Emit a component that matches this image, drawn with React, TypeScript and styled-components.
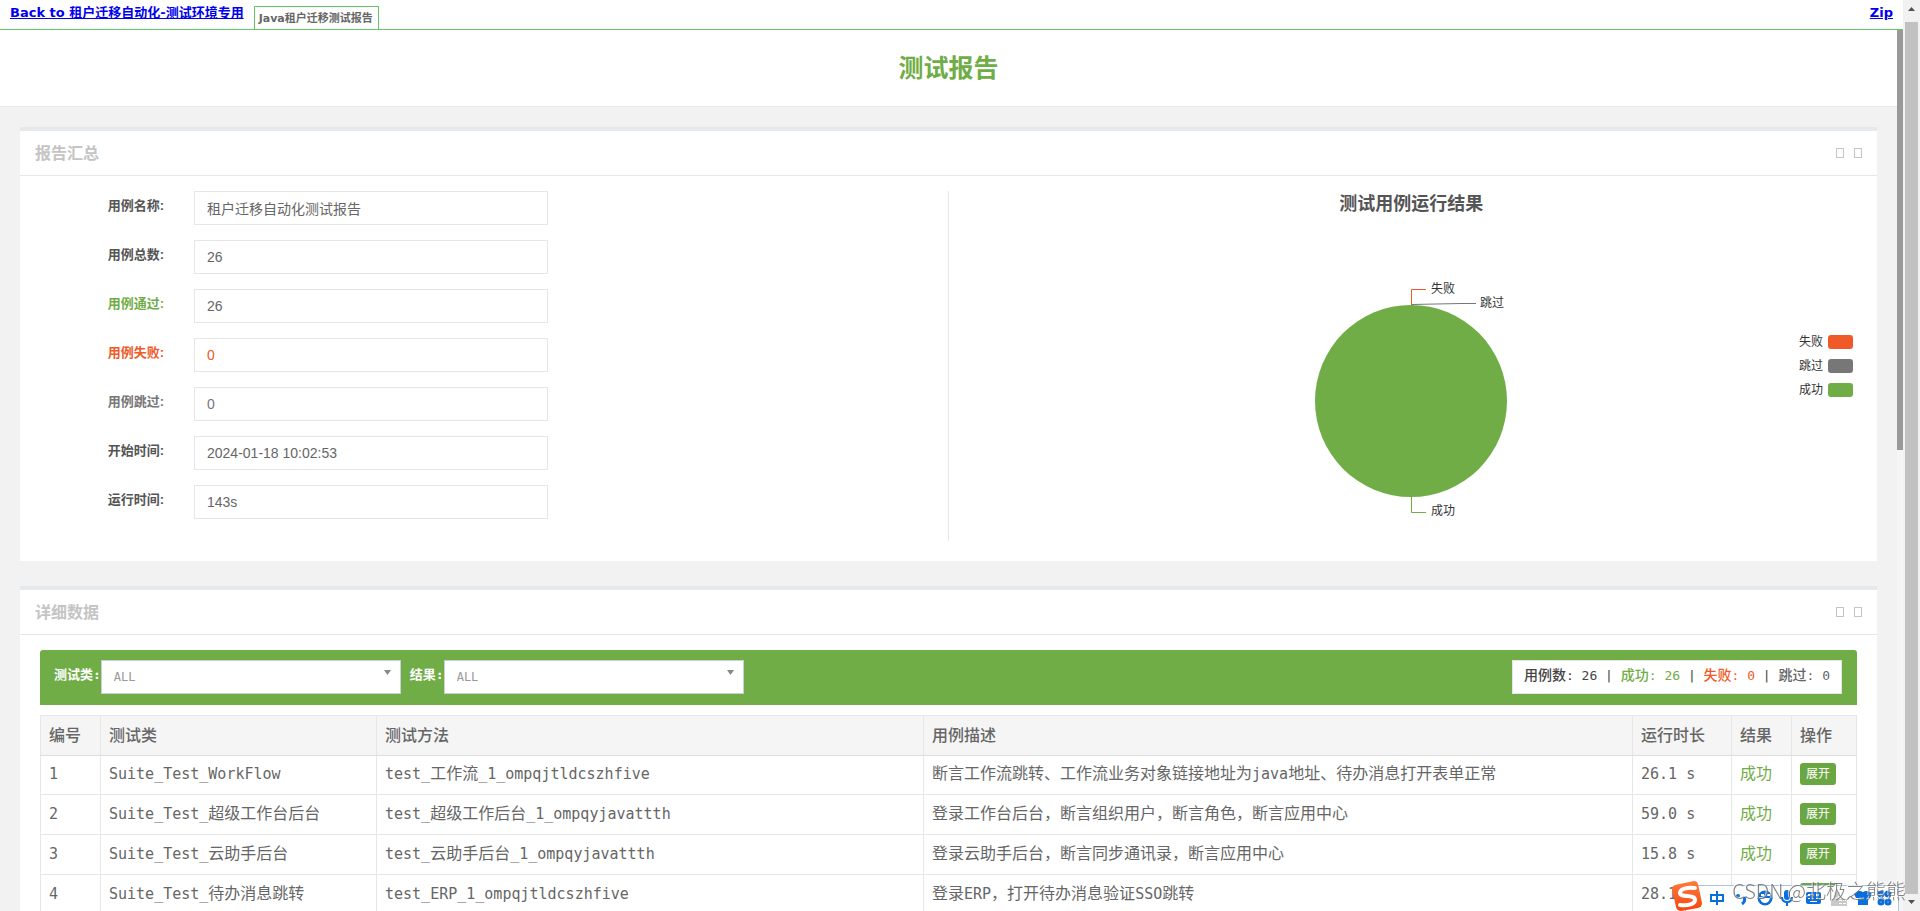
import React from 'react';
import styled, { createGlobalStyle } from 'styled-components';

const GREEN = '#70ad47';
const RED = '#f05a28';
const GRAY = '#777777';
const LINE = '#e7e7e7';
const SANS = '"Liberation Sans", "Noto Sans CJK SC", sans-serif';
const MONO = '"DejaVu Sans Mono", "Noto Sans CJK SC", monospace';

const GlobalStyle = createGlobalStyle`
  * { box-sizing: border-box; }
  body { margin: 0; overflow: hidden; background: #fff; color: #666; font-family: ${SANS}; }
`;

const Shell = styled.div`
  display: flex;
  height: 100vh;
  overflow: hidden;
`;

const Main = styled.div`
  flex: 1;
  min-width: 0;
  display: flex;
  flex-direction: column;
`;

const TopBar = styled.nav`
  flex: none;
  display: flex;
  align-items: flex-start;
  height: 30px;
  padding: 0 10px;
  border-bottom: 1px solid #66c766;
  font-family: "DejaVu Sans", "Noto Sans CJK SC", sans-serif;
`;

const NavLink = styled.a`
  color: #0000ee;
  font-size: 13px;
  font-weight: bold;
  line-height: 26px;
  &:last-child { margin-left: auto; }
`;

const Tab = styled.button`
  height: 23px;
  margin: 6px 0 0 10px;
  padding: 2px 5px 0 4px;
  border: 1px solid #66c766;
  border-bottom: 0;
  background: #fff;
  color: #666;
  font: bold 11px/18px "DejaVu Sans", "Noto Sans CJK SC", sans-serif;
`;

const Frame = styled.div`
  flex: 1;
  min-height: 0;
  display: flex;
`;

const Page = styled.main`
  flex: 1;
  min-width: 0;
  overflow: hidden;
  background: #f2f2f2;
`;

const PageHeader = styled.header`
  height: 77px;
  padding-top: 20px;
  border-bottom: 1px solid ${LINE};
  background: #fff;
  text-align: center;
`;

const PageTitle = styled.h1`
  margin: 0;
  color: ${GREEN};
  font-size: 25px;
  line-height: 36px;
`;

const Panels = styled.div`
  display: flex;
  flex-direction: column;
  gap: 25px;
  padding: 20px;
`;

const Panel = styled.section`
  border-top: 4px solid #e5e9ec;
  background: #fff;
`;

const PanelHead = styled.div`
  display: flex;
  align-items: center;
  gap: 10px;
  height: 45px;
  padding: 0 15px;
  border-bottom: 1px solid ${LINE};
`;

const PanelTitle = styled.h2`
  flex: 1;
  margin: 0;
  color: #c4c4c4;
  font-size: 16px;
  line-height: 26px;
  padding-top: 2px;
`;

const ToolButton = styled.button`
  width: 8px;
  height: 10px;
  padding: 0;
  border: 1px solid #c4c4c4;
  background: transparent;
`;

const Summary = styled.div`
  display: grid;
  grid-template-columns: calc(50% - 1px) 1fr;
  padding: 15px 0 20px;
`;

const Fields = styled.form`
  display: flex;
  flex-direction: column;
  gap: 15px;
`;

const Field = styled.div<{ $color: string }>`
  display: grid;
  grid-template-columns: 144px 354px;
  column-gap: 30px;
  color: ${p => p.$color};
`;

const FieldLabel = styled.label`
  text-align: right;
  font-size: 13px;
  font-weight: bold;
  line-height: 30px;
`;

const FieldInput = styled.input<{ $color: string }>`
  height: 34px;
  padding: 0 12px;
  border: 1px solid #e6e6e6;
  background: #fff;
  color: ${p => p.$color};
  font: 14px ${SANS};
`;

const ChartArea = styled.div`
  position: relative;
  height: 350px;
  padding: 0 18px 0 15px;
  border-left: 1px solid ${LINE};
  display: flex;
  flex-direction: column;
  align-items: center;
`;

const ChartTitle = styled.h3`
  margin: 0;
  color: #555;
  font-size: 18px;
  line-height: 26px;
`;

const Pie = styled.svg`
  display: block;
  width: 240px;
  height: 324px;
  font: 12px ${SANS};
`;

const Legend = styled.ul`
  position: absolute;
  top: 144px;
  right: 24px;
  display: flex;
  flex-direction: column;
  gap: 10px;
  margin: 0;
  padding: 0;
  list-style: none;
`;

const LegendItem = styled.li<{ $color: string }>`
  display: flex;
  align-items: center;
  gap: 5px;
  color: #333;
  font-size: 12px;
  line-height: 14px;
  &::after {
    content: '';
    width: 25px;
    height: 14px;
    border-radius: 3px;
    background: ${p => p.$color};
  }
`;

const Detail = styled.div`
  padding: 15px 20px;
  font-family: ${MONO};
`;

const FilterBar = styled.div`
  display: flex;
  gap: 9px;
  height: 55px;
  margin-bottom: 10px;
  padding: 10px 15px 10px 14px;
  border-radius: 3px 3px 0 0;
  background: ${GREEN};
`;

const Filter = styled.div`
  display: flex;
  height: 34px;
`;

const FilterLabel = styled.label`
  color: #fff;
  font-size: 13px;
  font-weight: bold;
  line-height: 30px;
`;

const SelectWrap = styled.div`
  position: relative;
`;

const Select = styled.select`
  appearance: none;
  width: 300px;
  height: 34px;
  padding: 0 12px;
  border: 1px solid #c8d0dc;
  border-radius: 0;
  background: #fff;
  color: #999;
  font: 12px ${MONO};
`;

const SelectArrow = styled.svg`
  position: absolute;
  top: 10px;
  right: 10px;
  width: 7px;
  height: 5px;
  fill: #888;
  pointer-events: none;
`;

const Totals = styled.div`
  height: 34px;
  margin-left: auto;
  padding: 0 11px;
  border: 1px solid #e6e6e6;
  background: #fff;
  color: #444;
  font-size: 13px;
  line-height: 30px;
  white-space: pre;
`;

const Tint = styled.span<{ $color: string }>`
  color: ${p => p.$color};
`;

const Han = styled.span<{ $size: number; $bold?: boolean }>`
  font-family: "Noto Sans CJK SC", sans-serif;
  font-size: ${p => p.$size}px;
  font-weight: ${p => (p.$bold ? 500 : 'inherit')};
  line-height: 1;
`;

const Table = styled.table`
  width: 100%;
  table-layout: fixed;
  border-collapse: collapse;
  color: #666;
  font-size: 15px;
  line-height: 22px;
`;

const HeadCell = styled.th`
  height: 40px;
  padding: 0 8px 4px;
  border: 1px solid ${LINE};
  border-bottom: 1px solid #dddddd;
  background: #f5f5f5;
  text-align: left;
  font: 500 16px/24px "Noto Sans CJK SC", sans-serif;
`;

const Cell = styled.td`
  height: 40px;
  padding: 0 8px 2px;
  border: 1px solid ${LINE};
  white-space: nowrap;
  tr:first-child > & { height: 39px; }
`;

const ExpandButton = styled.button`
  display: block;
  height: 22px;
  padding: 0 6px;
  border: 0;
  border-radius: 3px;
  background: #6aa742;
  color: #fff;
  font: 12px/20px ${SANS};
`;

const InnerTrack = styled.div`
  width: 6px;
  background: #f5f5f5;
`;

const InnerThumb = styled.div`
  height: 420px;
  background: #999;
`;

const OuterTrack = styled.div`
  width: 17px;
  display: flex;
  flex-direction: column;
  align-items: center;
  background: #f1f1f1;
`;

const OuterThumb = styled.div`
  flex: 1;
  width: 13px;
  background: #c1c1c1;
`;

const Arrow = styled.svg`
  display: block;
  width: 17px;
  fill: #505050;
`;

const ImeBar = styled.svg`
  position: fixed;
  right: 20px;
  bottom: 0;
  width: 230px;
  height: 31px;
`;

const Watermark = styled.div`
  position: fixed;
  right: 14px;
  bottom: 7px;
  color: rgba(115, 115, 115, 0.9);
  font: 300 20px/26px "Noto Sans CJK SC", sans-serif;
  text-shadow: -1px -1px 0 rgba(255, 255, 255, 0.7);
  pointer-events: none;
`;

/** Sets Chinese runs in their own face and size, next to the monospaced Latin ones. */
function Mixed({ text, size = 16, bold }: { text: string; size?: number; bold?: boolean }) {
  const runs = text.split(/([\u3000-\u303f\u4e00-\u9fff\uff00-\uffef]+)/);
  return (
    <>
      {runs.map((run, i) => (i % 2 ? <Han key={i} $size={size} $bold={bold}>{run}</Han> : run))}
    </>
  );
}

const fields = [
  { id: 'name', label: '用例名称:', value: '租户迁移自动化测试报告', color: '#555', text: '#666' },
  { id: 'all', label: '用例总数:', value: '26', color: '#555', text: '#666' },
  { id: 'pass', label: '用例通过:', value: '26', color: GREEN, text: '#666' },
  { id: 'fail', label: '用例失败:', value: '0', color: RED, text: RED },
  { id: 'skip', label: '用例跳过:', value: '0', color: GRAY, text: GRAY },
  { id: 'begin', label: '开始时间:', value: '2024-01-18 10:02:53', color: '#555', text: '#666' },
  { id: 'total', label: '运行时间:', value: '143s', color: '#555', text: '#666' },
];

const legend = [
  { name: '失败', color: RED },
  { name: '跳过', color: GRAY },
  { name: '成功', color: GREEN },
];

const columns = [
  { name: '编号', width: 60 },
  { name: '测试类', width: 276 },
  { name: '测试方法', width: 547 },
  { name: '用例描述' },
  { name: '运行时长', width: 99 },
  { name: '结果', width: 60 },
  { name: '操作', width: 65 },
];

const rows = [
  ['Suite_Test_WorkFlow', 'test_工作流_1_ompqjtldcszhfive', '断言工作流跳转、工作流业务对象链接地址为java地址、待办消息打开表单正常', '26.1 s'],
  ['Suite_Test_超级工作台后台', 'test_超级工作后台_1_ompqyjavattth', '登录工作台后台，断言组织用户，断言角色，断言应用中心', '59.0 s'],
  ['Suite_Test_云助手后台', 'test_云助手后台_1_ompqyjavattth', '登录云助手后台，断言同步通讯录，断言应用中心', '15.8 s'],
  ['Suite_Test_待办消息跳转', 'test_ERP_1_ompqjtldcszhfive', '登录ERP，打开待办消息验证SSO跳转', '28.1 s'],
];

function PanelHeading({ title }: { title: string }) {
  return (
    <PanelHead>
      <PanelTitle>{title}</PanelTitle>
      <ToolButton type="button" aria-label="收起" />
      <ToolButton type="button" aria-label="关闭" />
    </PanelHead>
  );
}

function FilterSelect({ id, label }: { id: string; label: string }) {
  return (
    <Filter>
      <FilterLabel htmlFor={id}>{label}</FilterLabel>
      <SelectWrap>
        <Select id={id} defaultValue="ALL">
          <option>ALL</option>
        </Select>
        <SelectArrow viewBox="0 0 7 5"><path d="M0 0h7L3.5 5z" /></SelectArrow>
      </SelectWrap>
    </Filter>
  );
}

function ResultPie() {
  return (
    <Pie viewBox="0 0 240 324">
      <circle cx="120" cy="184" r="96" fill={GREEN} />
      <g fill="none" strokeWidth="1">
        <path d="M120.5 88V72.5H135" stroke={RED} />
        <path d="M120 87.5L170 86.5H185" stroke={GRAY} />
        <path d="M120.5 280V295.5H135" stroke={GREEN} />
      </g>
      <g fill="#333">
        <text x="140" y="76">失败</text>
        <text x="189" y="90">跳过</text>
        <text x="140" y="298">成功</text>
      </g>
    </Pie>
  );
}

function InputMethodBar() {
  return (
    <ImeBar viewBox="0 0 230 31">
      <defs>
        <linearGradient id="sogou" x1="0" y1="0" x2="0" y2="1">
          <stop offset="0" stopColor="#ff7a3c" />
          <stop offset="1" stopColor="#f4460f" />
        </linearGradient>
      </defs>
      <rect x="15.5" y="5.5" width="213" height="28" fill="#fff" stroke="#a9c1e4" />
      <path d="M5 5L24 1q3 0 4 3l4 19q0 4-4 5L11 31q-4 0-5-4L2 9q0-3 3-4z" fill="url(#sogou)" />
      <path d="M25 8C17 7 10 9 10 13c0 5 15 1 15 7 0 4-7 6-15 5" fill="none" stroke="#fff" strokeWidth="4" strokeLinecap="round" />
      <g fill="none" stroke="#0a6fdc" strokeWidth="2">
        <path d="M41 15h12v6H41zM47 11v14" />
        <circle cx="68" cy="16" r="1" />
        <path d="M74 17q2 4-2 7" strokeWidth="3" />
        <path d="M112 17q0 5 5 5t5-5M117 22v4" />
      </g>
      <circle cx="95" cy="18" r="7.500" fill="#0a6fdc" />
      <path d="M90 18h10q-1 5-5 5t-5-5zM91 14h3v2h-3zM97 14h3v2h-3z" fill="#fff" />
      <rect x="114" y="10" width="6" height="10" rx="3" fill="#0a6fdc" />
      <rect x="136" y="12" width="15" height="12" rx="2" fill="#0a6fdc" />
      <path d="M138 14h2v2h-2zM142 14h2v2h-2zM146 14h3v2h-3zM138 18h2v1h-2zM142 18h2v1h-2zM146 18h3v1h-3zM140 21h7v1h-7z" fill="#fff" />
      <path d="M164 14a3 3 0 1 1 4 3v2h9v7h-16v-4q0-3 3-4z" fill="#c9c9c9" />
      <path d="M169 20h3v1h-3zM173 20h3v1h-3zM169 23h3v1h-3zM173 23h3v1h-3z" fill="#fff" />
      <path d="M188 11h3q2 2 4 0h3l4 3-2 4h-2v7h-10v-7h-2l-2-4z" fill="#0a6fdc" />
      <g fill="none" stroke="#0a6fdc" strokeWidth="3">
        <circle cx="211" cy="14" r="2" />
        <circle cx="218" cy="14" r="2" />
        <circle cx="211" cy="22" r="2" />
        <circle cx="218" cy="22" r="2" />
      </g>
    </ImeBar>
  );
}

export default function App() {
  return (
    <Shell>
      <GlobalStyle />
      <Main>
        <TopBar>
          <NavLink href="#back">Back to 租户迁移自动化-测试环境专用</NavLink>
          <Tab type="button">Java租户迁移测试报告</Tab>
          <NavLink href="#zip">Zip</NavLink>
        </TopBar>
        <Frame>
          <Page>
            <PageHeader>
              <PageTitle>测试报告</PageTitle>
            </PageHeader>
            <Panels>
              <Panel>
                <PanelHeading title="报告汇总" />
                <Summary>
                  <Fields>
                    {fields.map(f => (
                      <Field key={f.id} $color={f.color}>
                        <FieldLabel htmlFor={f.id}>{f.label}</FieldLabel>
                        <FieldInput id={f.id} $color={f.text} defaultValue={f.value} readOnly />
                      </Field>
                    ))}
                  </Fields>
                  <ChartArea>
                    <ChartTitle>测试用例运行结果</ChartTitle>
                    <ResultPie />
                    <Legend>
                      {legend.map(l => (
                        <LegendItem key={l.name} $color={l.color}>{l.name}</LegendItem>
                      ))}
                    </Legend>
                  </ChartArea>
                </Summary>
              </Panel>
              <Panel>
                <PanelHeading title="详细数据" />
                <Detail>
                  <FilterBar>
                    <FilterSelect id="suite" label="测试类:" />
                    <FilterSelect id="result" label="结果:" />
                    <Totals>
                      <Mixed text="用例数: 26 | " size={14} bold />
                      <Tint $color={GREEN}><Mixed text="成功: 26" size={14} bold /></Tint>
                      {' | '}
                      <Tint $color={RED}><Mixed text="失败: 0" size={14} bold /></Tint>
                      {' | '}
                      <Tint $color="#666"><Mixed text="跳过: 0" size={14} bold /></Tint>
                    </Totals>
                  </FilterBar>
                  <Table>
                    <colgroup>
                      {columns.map(c => <col key={c.name} width={c.width} />)}
                    </colgroup>
                    <thead>
                      <tr>{columns.map(c => <HeadCell key={c.name} scope="col">{c.name}</HeadCell>)}</tr>
                    </thead>
                    <tbody>
                      {rows.map((row, i) => (
                        <tr key={row[0]}>
                          <Cell>{i + 1}</Cell>
                          {row.map(text => <Cell key={text}><Mixed text={text} /></Cell>)}
                          <Cell><Tint $color={GREEN}><Mixed text="成功" /></Tint></Cell>
                          <Cell><ExpandButton type="button">展开</ExpandButton></Cell>
                        </tr>
                      ))}
                    </tbody>
                  </Table>
                </Detail>
              </Panel>
            </Panels>
          </Page>
          <InnerTrack><InnerThumb /></InnerTrack>
        </Frame>
      </Main>
      <OuterTrack>
        <Arrow viewBox="0 0 17 22" height="22"><path d="M5 11h7L8.500 7z" /></Arrow>
        <OuterThumb />
        <Arrow viewBox="0 0 17 17" height="17"><path d="M5 6h7L8.500 10z" /></Arrow>
      </OuterTrack>
      <InputMethodBar />
      <Watermark>CSDN @北极之熊熊</Watermark>
    </Shell>
  );
}
